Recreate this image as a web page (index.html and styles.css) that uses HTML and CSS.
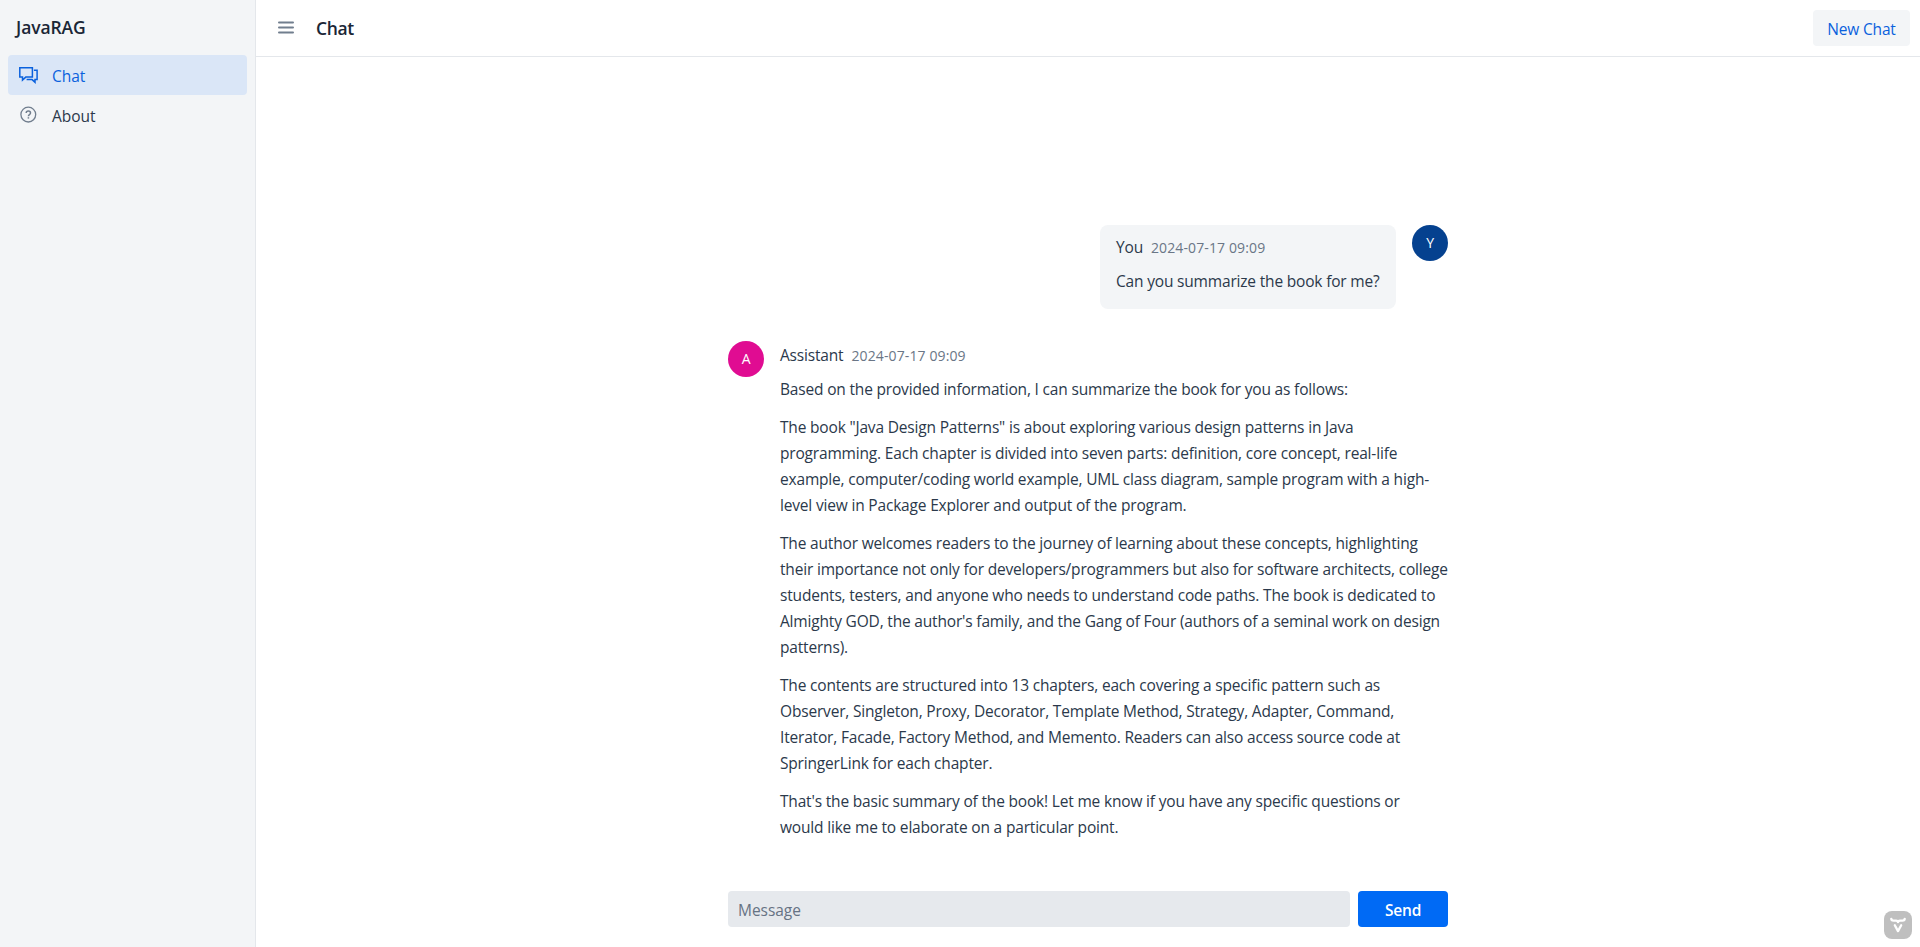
FILE: index.html
```html
<!DOCTYPE html>
<html lang="en">
<head>
<meta charset="utf-8">
<title>Chat</title>
<link rel="stylesheet" href="styles.css">
</head>
<body>
<div class="app">
  <aside class="drawer">
    <h1 class="brand">JavaRAG</h1>
    <nav class="nav">
      <a class="nav-item active">
        <svg class="nav-icon" viewBox="0 0 20 20" fill="none" stroke="currentColor" stroke-width="1.5"><path d="M1.800 2.700h12.600v9.400H7.800l-3.300 2.900v-2.900H1.800z"/><path d="M15.900 5.300h3.200v9.300H17v2.600l-2.900-2.600H8.600"/></svg>
        <span>Chat</span>
      </a>
      <a class="nav-item">
        <svg class="nav-icon" viewBox="0 0 20 20" fill="none" stroke="currentColor" stroke-width="1.300"><circle cx="10.300" cy="9.600" r="7.400"/><path d="M8.200 8c0-2.600 4.300-2.600 4.300 0 0 1.600-2.100 1.500-2.100 3.300" stroke-width="1.500"/><path d="M10.400 12.200v1.400" stroke-width="1.500"/></svg>
        <span>About</span>
      </a>
    </nav>
  </aside>
  <main class="main">
    <header class="topbar">
      <svg class="menu" viewBox="0 0 16 14" stroke="currentColor" stroke-width="2" stroke-linecap="round"><path d="M1 1.500h14M1 6.500h14M1 11.500h14"/></svg>
      <h2 class="title">Chat</h2>
      <button class="new-chat">New Chat</button>
    </header>
    <section class="chat">
      <article class="message own">
        <div class="bubble">
          <div class="meta"><span class="name">You</span><time>2024-07-17 09:09</time></div>
          <p>Can you summarize the book for me?</p>
        </div>
        <div class="avatar navy">Y</div>
      </article>
      <article class="message">
        <div class="avatar pink">A</div>
        <div class="body">
          <div class="meta"><span class="name">Assistant</span><time>2024-07-17 09:09</time></div>
          <p>Based on the provided information, I can summarize the book for you as follows:</p>
          <p>The book "Java Design Patterns" is about exploring various design patterns in Java<br>programming. Each chapter is divided into seven parts: definition, core concept, real-life<br>example, computer/coding world example, UML class diagram, sample program with a high-<br>level view in Package Explorer and output of the program.</p>
          <p>The author welcomes readers to the journey of learning about these concepts, highlighting<br>their importance not only for developers/programmers but also for software architects, college<br>students, testers, and anyone who needs to understand code paths. The book is dedicated to<br>Almighty GOD, the author's family, and the Gang of Four (authors of a seminal work on design<br>patterns).</p>
          <p>The contents are structured into 13 chapters, each covering a specific pattern such as<br>Observer, Singleton, Proxy, Decorator, Template Method, Strategy, Adapter, Command,<br>Iterator, Facade, Factory Method, and Memento. Readers can also access source code at<br>SpringerLink for each chapter.</p>
          <p>That's the basic summary of the book! Let me know if you have any specific questions or<br>would like me to elaborate on a particular point.</p>
        </div>
      </article>
      <form class="composer">
        <div class="field">Message</div>
        <button type="button" class="send">Send</button>
      </form>
    </section>
  </main>
  <div class="badge">
    <svg viewBox="0 0 28 28" fill="none" stroke="#fff" stroke-width="2.300" stroke-linecap="round" stroke-linejoin="round"><path d="M7.300 7.800c0 1.700.7 1.900 2.200 1.900h2.500c1.300 0 2 .4 2 1.500 0-1.100.7-1.500 2-1.500h2.500c1.500 0 2.200-.2 2.200-1.900"/><path d="M10.800 14.200l3.200 5.900 3.200-5.900"/></svg>
  </div>
</div>
</body>
</html>
```
FILE: styles.css
```css
* { box-sizing: border-box; }

body {
  margin: 0;
  font-family: "Open Sans", "Noto Sans", sans-serif;
  font-size: 15.500px;
  letter-spacing: -0.180px;
  line-height: 26px;
  color: #2b394b;
  background: #fff;
}

h1, h2, p { margin: 0; }
button { border: 0; font: inherit; letter-spacing: inherit; }

.app { display: flex; height: 947px; overflow: hidden; }

.drawer {
  width: 256px;
  flex: none;
  background: #f3f5f7;
  border-right: 1px solid #e4e7eb;
}
.brand {
  padding: 14px 16px 15px;
  font-size: 17.500px;
  font-weight: 600;
  letter-spacing: -0.100px;
  color: #1a2636;
}
.nav { padding: 0 8px; }
.nav-item {
  display: flex;
  align-items: center;
  gap: 14px;
  height: 40px;
  padding-left: 10px;
  border-radius: 4px;
}
.nav-item span { padding-top: 1px; letter-spacing: -0.050px; }
.nav-item .nav-icon { width: 20px; height: 20px; color: #717e8e; }
.nav-item.active, .nav-item.active .nav-icon { color: #0a61dd; }
.nav-item.active { background: #dae6f7; }

.main { flex: 1; display: flex; flex-direction: column; }
.topbar {
  display: flex;
  align-items: center;
  height: 57px;
  padding: 0 10px 0 22px;
  border-bottom: 1px solid #e4e7eb;
}
.menu { width: 16px; height: 14px; color: #717e8e; }
.title {
  margin-left: 22px;
  font-size: 17.500px;
  font-weight: 600;
  letter-spacing: -0.400px;
  color: #1a2636;
}
.new-chat {
  width: 97px;
  height: 36px;
  margin-left: auto;
  padding: 2px 0 0;
  border-radius: 4px;
  background: #f3f5f7;
  color: #0a61dd;
}

.chat {
  flex: 1;
  display: flex;
  flex-direction: column;
  justify-content: flex-end;
  width: 720px;
  margin: 0 auto;
  padding-bottom: 20px;
}
.message { display: flex; align-items: flex-start; gap: 16px; }
.own { justify-content: flex-end; margin-bottom: 32px; }
.bubble {
  width: 296px;
  height: 84px;
  padding: 9px 16px;
  border-radius: 8px;
  background: #f3f5f7;
}
.avatar {
  display: flex;
  align-items: center;
  justify-content: center;
  flex: none;
  width: 36px;
  height: 36px;
  border-radius: 50%;
  font-size: 14px;
  color: #fff;
}
.navy { background: #05418f; }
.pink { background: #e00c92; }
.body { flex: 1; padding-top: 1px; white-space: nowrap; }
.meta { display: flex; gap: 8px; margin-bottom: 8px; }
.meta time { padding-top: 1px; margin-bottom: -1px; font-size: 14px; letter-spacing: 0.120px; color: #6a7686; }
.body p + p { margin-top: 12px; }

.composer { display: flex; gap: 8px; margin-top: 51px; }
.field {
  flex: 1;
  height: 36px;
  padding: 6px 10px;
  border-radius: 4px;
  background: #e6e9ed;
  color: #667384;
  letter-spacing: -0.050px;
}
.send {
  width: 90px;
  height: 36px;
  padding: 2px 0 0;
  border-radius: 4px;
  background: #006af5;
  color: #fff;
  font-weight: 600;
}

.badge {
  position: absolute;
  right: 8px;
  bottom: 8px;
  width: 28px;
  height: 28px;
  border-radius: 8px;
  background: #bfbfbf;
}
.badge svg { display: block; width: 28px; height: 28px; }
```
